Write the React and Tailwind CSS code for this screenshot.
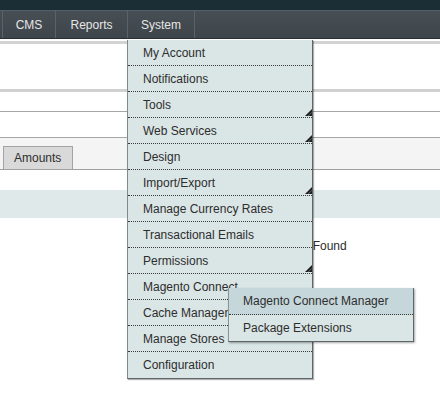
import React from "react";

const Tri = () => (
  <svg width="7" height="7" viewBox="0 0 7 7" className="absolute right-0 bottom-[1px]">
    <path d="M0 7 L7 0 L7 7 Z" fill="#1e1e1e" />
    <path d="M3.2 7 L7 3.2" stroke="#7d8a8c" strokeWidth="0.7" />
  </svg>
);

const items = [
  ["My Account", false],
  ["Notifications", false],
  ["Tools", true],
  ["Web Services", true],
  ["Design", false],
  ["Import/Export", true],
  ["Manage Currency Rates", false],
  ["Transactional Emails", false],
  ["Permissions", true],
  ["Magento Connect", true],
  ["Cache Management", false],
  ["Manage Stores", false],
  ["Configuration", false],
];

export default function App() {
  return (
    <div className="relative w-[440px] h-[409px] overflow-hidden bg-white font-['Liberation_Sans',Arial,sans-serif] text-[12px] text-[#2d2d2d]">
      {/* header */}
      <div className="h-[10px] bg-[#1c2e35]" />
      <div className="h-[1px] bg-[#56606a]" />
      <div className="h-[28px] flex bg-gradient-to-b from-[#474e54] to-[#3e454b] border-b border-[#2a2f33] text-[#e6e6e6]">
        <div className="w-[2px]" />
        <div className="w-[53px] border-l border-[#5b6369] flex items-center justify-center">CMS</div>
        <div className="w-[72px] border-l border-[#5b6369] flex items-center justify-center">Reports</div>
        <div className="w-[68px] border-l border-[#5b6369] border-r flex items-center justify-center">System</div>
      </div>

      {/* content */}
      <div className="h-[2px]" />
      <div className="h-[3px] bg-[#d3d3d3]" />
      <div className="h-[45px]" />
      <div className="h-[3px] bg-[#d0d0d0]" />
      <div className="h-[19px]" />
      <div className="h-[1px] bg-[#a6a6a6]" />
      <div className="h-[25px]" />
      <div className="h-[1px] bg-[#a6a6a6]" />
      <div className="h-[31px] bg-[#f4f4f4] flex items-end pl-[3px]">
        <div className="h-[23px] w-[70px] bg-[#d9d9d9] border border-b-0 border-[#a3a3a3] flex items-center pl-[10px]">Amounts</div>
      </div>
      <div className="h-[1px] bg-[#a0a0a0]" />
      <div className="h-[20px]" />
      <div className="h-[28px] bg-[#dfe9ea]" />
      <div className="pt-[21px] pl-[246px] leading-[14px]">No Records Found</div>

      {/* dropdown */}
      <div className="absolute left-[127px] top-[40px] w-[186px] bg-[#dae5e6] border-l border-r border-b border-l-[#7f8a8d] border-r-[#5c6568] border-b-[#5c6568] shadow-[1px_1px_1px_rgba(0,0,0,0.3)] z-10">
        {items.map(([label, arrow], i) => (
          <div
            key={label}
            className={
              "relative h-[26px] pl-[15px] flex items-center " +
              (i < items.length - 1 ? "border-b border-dotted border-[#3a3a3a]" : "")
            }
          >
            <span className="whitespace-nowrap">{label}</span>
            {arrow && <Tri />}
          </div>
        ))}
      </div>

      {/* submenu */}
      <div className="absolute left-[228px] top-[288px] w-[186px] bg-[#dae5e6] border border-t-0 border-l-[#8a9598] border-r-[#5c6568] border-b-[#5c6568] shadow-[1px_1px_2px_rgba(0,0,0,0.35)] z-20">
        <div className="h-[27px] pl-[14px] flex items-center bg-[#c6d7db] border-b border-dotted border-[#3a3a3a] whitespace-nowrap">
          Magento Connect Manager
        </div>
        <div className="h-[26px] pl-[14px] flex items-center whitespace-nowrap">Package Extensions</div>
      </div>
    </div>
  );
}
